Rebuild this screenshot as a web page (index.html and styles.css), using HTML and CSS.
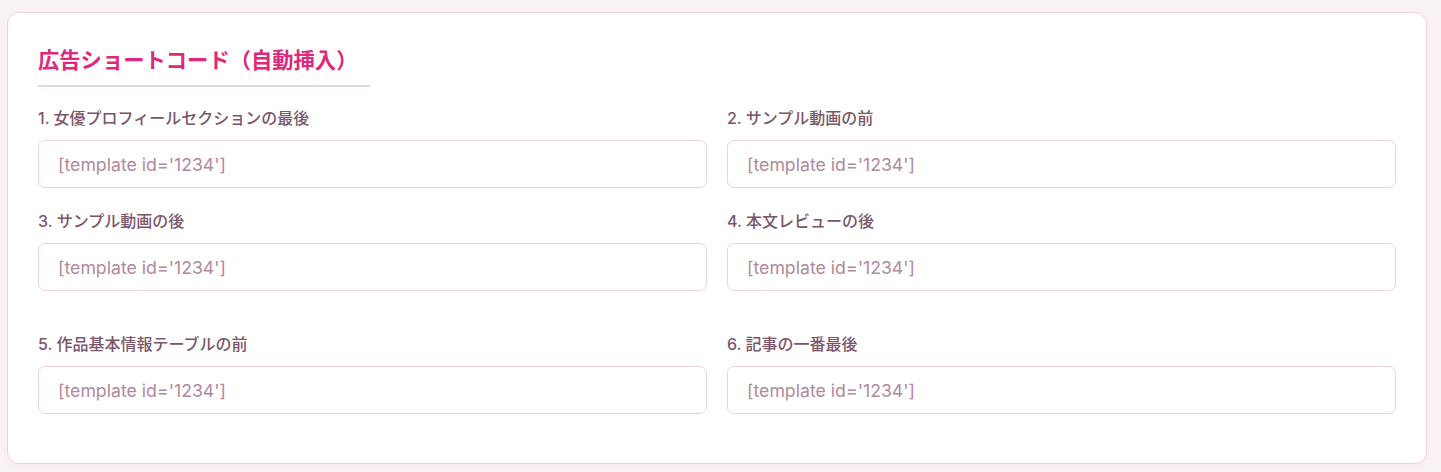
FILE: index.html
```html
<!DOCTYPE html>
<html lang="ja">
<head>
    <meta charset="UTF-8">
    <title>広告ショートコード</title>
    <link rel="stylesheet" href="styles.css">
</head>
<body>
    <div class="card">
        <h2 class="section-title">広告ショートコード（自動挿入）</h2>

        <div class="field-grid">
            <div class="field">
                <label class="field-label">1. 女優プロフィールセクションの最後</label>
                <input class="field-input" type="text" placeholder="[template id='1234']">
            </div>
            <div class="field">
                <label class="field-label">2. サンプル動画の前</label>
                <input class="field-input" type="text" placeholder="[template id='1234']">
            </div>
            <div class="field">
                <label class="field-label">3. サンプル動画の後</label>
                <input class="field-input" type="text" placeholder="[template id='1234']">
            </div>
            <div class="field">
                <label class="field-label">4. 本文レビューの後</label>
                <input class="field-input" type="text" placeholder="[template id='1234']">
            </div>
        </div>

        <div class="field-grid field-grid-spaced">
            <div class="field">
                <label class="field-label">5. 作品基本情報テーブルの前</label>
                <input class="field-input" type="text" placeholder="[template id='1234']">
            </div>
            <div class="field">
                <label class="field-label">6. 記事の一番最後</label>
                <input class="field-input" type="text" placeholder="[template id='1234']">
            </div>
        </div>
    </div>
</body>
</html>
```

FILE: styles.css
```css
* {
    margin: 0;
    padding: 0;
    box-sizing: border-box;
}

body {
    font-family: Inter, "Noto Sans CJK JP", sans-serif;
    background-color: #f9f3f6;
    padding: 12px 14px 8px 7px;
}

.card {
    background-color: #ffffff;
    border: 1px solid #ecd3df;
    border-radius: 12px;
    padding: 32px 30px 49px 30px;
    box-shadow: 0 2px 8px rgba(214, 51, 132, 0.05);
}

.section-title {
    display: inline-block;
    color: #e0287a;
    font-size: 21.3px;
    font-weight: 700;
    line-height: 30px;
    padding-right: 13px;
    padding-bottom: 10px;
    border-bottom: 2px solid #ecd3e1;
    margin-bottom: 20px;
}

.field-grid {
    display: grid;
    grid-template-columns: 1fr 1fr;
    column-gap: 20px;
    row-gap: 22px;
}

.field-grid-spaced {
    margin-top: 42px;
}

.field {
    display: flex;
    flex-direction: column;
}

.field-label {
    color: #7b5568;
    font-size: 16px;
    font-weight: 500;
    line-height: 22px;
    margin-bottom: 11px;
}

.field-input {
    height: 48px;
    padding: 0 19px;
    font-family: Inter, "Noto Sans CJK JP", sans-serif;
    font-size: 17.7px;
    color: #5a3d4c;
    border: 1px solid #ecd3df;
    border-radius: 7px;
    background-color: #ffffff;
    outline: none;
}

.field-input::placeholder {
    color: #b0899d;
}
```
